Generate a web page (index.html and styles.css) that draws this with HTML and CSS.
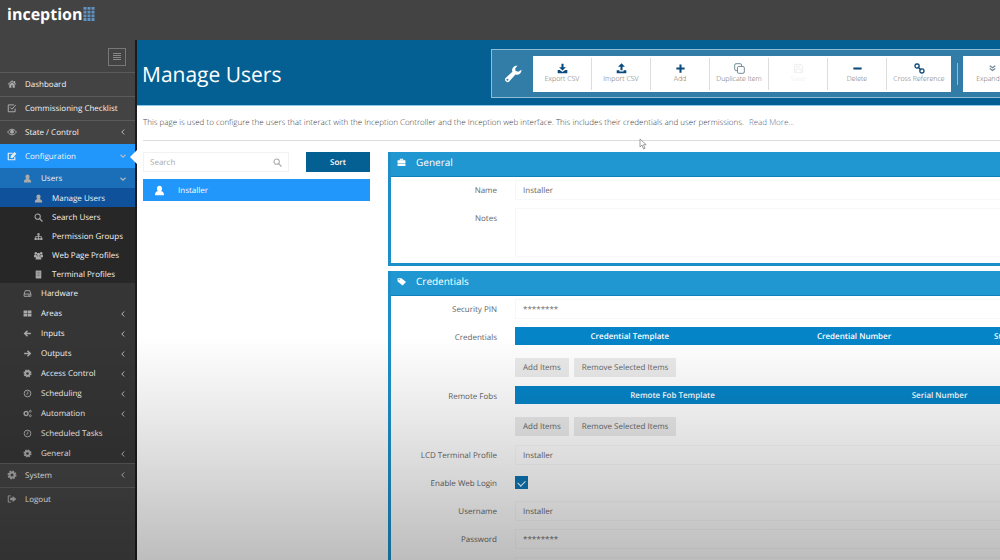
FILE: index.html
```html
<!DOCTYPE html>
<html lang="en">
<head>
    <meta charset="UTF-8">
    <meta name="viewport" content="width=device-width, initial-scale=1.0">
    <title>Manage Users - Inception</title>
    <link rel="stylesheet" href="styles.css">
</head>
<body>

    <!-- Icon set -->
    <svg class="sprite" aria-hidden="true">
        <symbol id="i-home" viewBox="0 0 16 16"><path d="M8 2 1 8.300l1 1 6-5.300 6 5.300 1-1-2-1.800V3h-2v1.700zM3.500 9v5h3.500v-4h2v4h3.500V9L8 5z"/></symbol>
        <symbol id="i-check" viewBox="0 0 16 16"><path d="M13 9v5H2V3h9M5 7l3 3 6-7" fill="none" stroke="currentColor" stroke-width="1.600"/></symbol>
        <symbol id="i-eye" viewBox="0 0 16 16"><path d="M1 8c4-6 10-6 14 0-4 6-10 6-14 0z" fill="none" stroke="currentColor" stroke-width="1.500"/><circle cx="8" cy="7.500" r="3.200"/></symbol>
        <symbol id="i-edit" viewBox="0 0 16 16"><path d="M12.500 9v5H2V3.500h7" fill="none" stroke="currentColor" stroke-width="1.800"/><path d="M6 11V8l6-6.500 3 3L9 11z"/></symbol>
        <symbol id="i-user" viewBox="0 0 16 16"><path d="M8 1c2.500 0 3.700 1.800 3.700 4 0 1.600-.6 3-1.500 3.800C13 9.500 14.500 11 14.500 15h-13c0-4 1.500-5.500 4.300-6.200C4.900 8 4.300 6.600 4.300 5 4.300 2.800 5.500 1 8 1z"/></symbol>
        <symbol id="i-search" viewBox="0 0 16 16"><circle cx="6.500" cy="6.500" r="4.700" fill="none" stroke="currentColor" stroke-width="1.800"/><path d="m10 10 5 5" stroke="currentColor" stroke-width="2.200"/></symbol>
        <symbol id="i-sitemap" viewBox="0 0 16 16"><path d="M6 2h4v4H8.700v1.500h5V10H15v4h-4v-4h1.500V8.700H8.700V10H10v4H6v-4h1.300V8.700H3.500V10H5v4H1v-4h1.300V7.500h5V6H6z"/></symbol>
        <symbol id="i-group" viewBox="0 0 16 16"><circle cx="3.200" cy="4" r="2.200"/><circle cx="12.800" cy="4" r="2.200"/><circle cx="8" cy="6" r="3"/><path d="M0 11V8q0-2 4-1.500L5.500 9 4 11zM16 11V8q0-2-4-1.500L10.500 9l1.500 2zM3 15v-2.500Q3 9 8 9t5 3.500V15z"/></symbol>
        <symbol id="i-building" viewBox="0 0 16 16"><path d="M3 1h10v14H3z"/><path d="M5 4h6M5 7h6M5 10h6" stroke="#262626" stroke-dasharray="1.200"/></symbol>
        <symbol id="i-hdd" viewBox="0 0 16 16"><path d="M2 9 4 3h8l2 6v4H2zM2 9h12M9 11h3" fill="none" stroke="currentColor" stroke-width="1.600"/></symbol>
        <symbol id="i-grid" viewBox="0 0 16 16"><path d="M1 2.500h6.500v5H1zM8.500 2.500H15v5H8.500zM1 8.500h6.500v5H1zM8.500 8.500H15v5H8.500z"/></symbol>
        <symbol id="i-left" viewBox="0 0 16 16"><path d="M14 8H3M8 3 3 8l5 5" fill="none" stroke="currentColor" stroke-width="2.600"/></symbol>
        <symbol id="i-right" viewBox="0 0 16 16"><path d="M2 8h11M8 3l5 5-5 5" fill="none" stroke="currentColor" stroke-width="2.600"/></symbol>
        <symbol id="i-cog" viewBox="0 0 16 16"><circle cx="8" cy="8" r="4" fill="none" stroke="currentColor" stroke-width="3.200"/><circle cx="8" cy="8" r="6" fill="none" stroke="currentColor" stroke-width="2.400" stroke-dasharray="2.600 2.112"/></symbol>
        <symbol id="i-cogs" viewBox="0 0 16 16"><circle cx="5.500" cy="8" r="3.500" fill="none" stroke="currentColor" stroke-width="2.600"/><circle cx="13" cy="4" r="1.700" fill="none" stroke="currentColor" stroke-width="1.600"/><circle cx="13" cy="12" r="1.700" fill="none" stroke="currentColor" stroke-width="1.600"/></symbol>
        <symbol id="i-clock" viewBox="0 0 16 16"><circle cx="8" cy="8" r="6" fill="none" stroke="currentColor" stroke-width="1.700"/><path d="M8.500 4v5H5.500" fill="none" stroke="currentColor" stroke-width="1.400"/></symbol>
        <symbol id="i-logout" viewBox="0 0 16 16"><path d="M6 3H2v10h4" fill="none" stroke="currentColor" stroke-width="1.600"/><path d="M5 6h4V3l6 5-6 5v-3H5z"/></symbol>
        <symbol id="i-wrench" viewBox="0 0 16 16"><path d="M15.500 4.300c.2 3-2.600 5-5.300 4.100L4.600 14.600c-1.900 1.900-5-.9-3.200-3L7.400 6C6.500 3 8.900.2 12 .6L9.900 3l.4 2.400 2.500.6zM3 12.300a.8.800 0 1 0 .1 0z" fill-rule="evenodd"/></symbol>
        <symbol id="i-download" viewBox="0 0 16 16"><path d="M6.500 1h3v5H13L8 11 3 6h3.500zM1 10h3l4 3 4-3h3v5H1z"/></symbol>
        <symbol id="i-upload" viewBox="0 0 16 16"><path d="M6.500 10.500h3v-5H13L8 .5 3 5.500h3.500zM1 10.500h4v2h6v-2h4V15H1z"/></symbol>
        <symbol id="i-plus" viewBox="0 0 16 16"><path d="M6.500 2h3v4.500H14v3H9.500V14h-3V9.500H2v-3h4.500z"/></symbol>
        <symbol id="i-minus" viewBox="0 0 16 16"><path d="M2 6.500h12v3H2z"/></symbol>
        <symbol id="i-copy" viewBox="0 0 16 16"><rect x="1" y="1" width="10" height="10" rx="2" fill="none" stroke="currentColor" stroke-width="1.400"/><rect x="5" y="5" width="10" height="10" rx="2" fill="#fff" stroke="currentColor" stroke-width="1.400"/></symbol>
        <symbol id="i-save" viewBox="0 0 16 16"><path d="M2 2h10l2 2v10H2zM5 2v4h5V2M4 14V9h8v5" fill="none" stroke="currentColor" stroke-width="1.400"/></symbol>
        <symbol id="i-link" viewBox="0 0 16 16"><g fill="none" stroke="currentColor" stroke-width="2"><rect x="1.500" y="1.500" width="6" height="6" rx="2.600"/><rect x="8.500" y="8.500" width="6" height="6" rx="2.600"/><path d="m5.500 5.500 5 5"/></g></symbol>
        <symbol id="i-expand" viewBox="0 0 16 16"><path d="m4 4 4 3 4-3M4 8l4 3 4-3" fill="none" stroke="currentColor" stroke-width="1.800"/></symbol>
        <symbol id="i-briefcase" viewBox="0 0 16 16"><path d="M5 4V1.500h6V4h4v5H1V4zm1.500 0h3V3h-3zM1 9.700h14V14H1z"/></symbol>
        <symbol id="i-tag" viewBox="0 0 16 16"><path d="M1 2h7l8 7-6 6-9-7zm2.800 1.500a1 1 0 1 0 .1 0z" fill-rule="evenodd"/></symbol>
        <symbol id="i-angle-left" viewBox="0 0 16 16"><path d="m10.500 3-5 5 5 5" fill="none" stroke="currentColor" stroke-width="2"/></symbol>
        <symbol id="i-angle-down" viewBox="0 0 16 16"><path d="m3 5.500 5 5 5-5" fill="none" stroke="currentColor" stroke-width="2.200"/></symbol>
    </svg>

    <header class="topbar">
        <a class="logo" href="#">inception
            <svg viewBox="0 0 12 14" aria-hidden="true"><path d="M2 0v14M6 0v14M10 0v14" stroke="#6093c4" stroke-width="3" stroke-dasharray="2.800 .9"/></svg>
        </a>
    </header>

    <div class="layout">
        <nav class="sidebar">
            <div class="sidebar-top">
                <button class="menu-toggle" aria-label="Toggle menu"><span></span></button>
            </div>
            <ul class="menu">
                <li><a href="#"><svg class="icon"><use href="#i-home"/></svg>Dashboard</a></li>
                <li><a href="#"><svg class="icon"><use href="#i-check"/></svg>Commissioning Checklist</a></li>
                <li><a href="#"><svg class="icon"><use href="#i-eye"/></svg>State / Control<svg class="arrow"><use href="#i-angle-left"/></svg></a></li>
                <li>
                    <a class="open" href="#"><svg class="icon"><use href="#i-edit"/></svg>Configuration<svg class="arrow"><use href="#i-angle-down"/></svg></a>
                    <ul class="submenu">
                        <li>
                            <a class="open" href="#"><svg class="icon"><use href="#i-user"/></svg>Users<svg class="arrow"><use href="#i-angle-down"/></svg></a>
                            <ul class="submenu-inner">
                                <li><a class="active" href="#"><svg class="icon"><use href="#i-user"/></svg>Manage Users</a></li>
                                <li><a href="#"><svg class="icon"><use href="#i-search"/></svg>Search Users</a></li>
                                <li><a href="#"><svg class="icon"><use href="#i-sitemap"/></svg>Permission Groups</a></li>
                                <li><a href="#"><svg class="icon"><use href="#i-group"/></svg>Web Page Profiles</a></li>
                                <li><a href="#"><svg class="icon"><use href="#i-building"/></svg>Terminal Profiles</a></li>
                            </ul>
                        </li>
                        <li><a href="#"><svg class="icon"><use href="#i-hdd"/></svg>Hardware</a></li>
                        <li><a href="#"><svg class="icon"><use href="#i-grid"/></svg>Areas<svg class="arrow"><use href="#i-angle-left"/></svg></a></li>
                        <li><a href="#"><svg class="icon"><use href="#i-left"/></svg>Inputs<svg class="arrow"><use href="#i-angle-left"/></svg></a></li>
                        <li><a href="#"><svg class="icon"><use href="#i-right"/></svg>Outputs<svg class="arrow"><use href="#i-angle-left"/></svg></a></li>
                        <li><a href="#"><svg class="icon"><use href="#i-cog"/></svg>Access Control<svg class="arrow"><use href="#i-angle-left"/></svg></a></li>
                        <li><a href="#"><svg class="icon"><use href="#i-clock"/></svg>Scheduling<svg class="arrow"><use href="#i-angle-left"/></svg></a></li>
                        <li><a href="#"><svg class="icon"><use href="#i-cogs"/></svg>Automation<svg class="arrow"><use href="#i-angle-left"/></svg></a></li>
                        <li><a href="#"><svg class="icon"><use href="#i-clock"/></svg>Scheduled Tasks</a></li>
                        <li><a href="#"><svg class="icon"><use href="#i-cog"/></svg>General<svg class="arrow"><use href="#i-angle-left"/></svg></a></li>
                    </ul>
                </li>
                <li><a href="#"><svg class="icon"><use href="#i-cog"/></svg>System<svg class="arrow"><use href="#i-angle-left"/></svg></a></li>
                <li><a href="#"><svg class="icon"><use href="#i-logout"/></svg>Logout</a></li>
            </ul>
        </nav>

        <main class="content">
            <div class="page-head">
                <h1>Manage Users</h1>
                <div class="toolbar">
                    <svg class="wrench"><use href="#i-wrench"/></svg>
                    <div class="tools">
                        <button><svg><use href="#i-download"/></svg>Export CSV</button>
                        <button><svg><use href="#i-upload"/></svg>Import CSV</button>
                        <button><svg><use href="#i-plus"/></svg>Add</button>
                        <button class="grey"><svg><use href="#i-copy"/></svg>Duplicate Item</button>
                        <button disabled><svg><use href="#i-save"/></svg>Save</button>
                        <button><svg><use href="#i-minus"/></svg>Delete</button>
                        <button class="wide"><svg><use href="#i-link"/></svg>Cross Reference</button>
                    </div>
                    <span class="divider"></span>
                    <div class="tools">
                        <button class="grey"><svg><use href="#i-expand"/></svg>Expand All</button>
                    </div>
                </div>
            </div>

            <div class="page-body">
                <p class="intro">This page is used to configure the users that interact with the Inception Controller and the Inception web interface. This includes their credentials and user permissions. <a href="#">Read More...</a></p>

                <div class="columns">
                    <section class="list">
                        <div class="list-tools">
                            <div class="search">
                                <input type="text" placeholder="Search" aria-label="Search">
                                <svg><use href="#i-search"/></svg>
                            </div>
                            <button class="sort">Sort</button>
                        </div>
                        <a class="list-item" href="#"><svg><use href="#i-user"/></svg>Installer</a>
                    </section>

                    <form class="panels">
                        <section class="panel">
                            <h2><svg><use href="#i-briefcase"/></svg>General</h2>
                            <div class="fields">
                                <div class="row">
                                    <label for="name">Name</label>
                                    <input id="name" type="text" value="Installer">
                                </div>
                                <div class="row">
                                    <label for="notes">Notes</label>
                                    <textarea id="notes"></textarea>
                                </div>
                            </div>
                        </section>

                        <section class="panel">
                            <h2><svg><use href="#i-tag"/></svg>Credentials</h2>
                            <div class="fields">
                                <div class="row">
                                    <label for="pin">Security PIN</label>
                                    <input id="pin" type="text" value="********">
                                </div>
                                <div class="row">
                                    <span class="label">Credentials</span>
                                    <div class="grid">
                                        <table class="credentials">
                                            <tr><th>Credential Template</th><th>Credential Number</th><th>Status</th></tr>
                                        </table>
                                        <button type="button">Add Items</button>
                                        <button type="button">Remove Selected Items</button>
                                    </div>
                                </div>
                                <div class="row">
                                    <span class="label">Remote Fobs</span>
                                    <div class="grid">
                                        <table class="fobs">
                                            <tr><th>Remote Fob Template</th><th>Serial Number</th></tr>
                                        </table>
                                        <button type="button">Add Items</button>
                                        <button type="button">Remove Selected Items</button>
                                    </div>
                                </div>
                                <div class="row">
                                    <label for="lcd">LCD Terminal Profile</label>
                                    <select id="lcd"><option>Installer</option></select>
                                </div>
                                <div class="row">
                                    <label for="web">Enable Web Login</label>
                                    <input id="web" type="checkbox" checked>
                                </div>
                                <div class="row">
                                    <label for="username">Username</label>
                                    <input id="username" type="text" value="Installer">
                                </div>
                                <div class="row">
                                    <label for="password">Password</label>
                                    <input id="password" type="text" value="********">
                                </div>
                                <div class="row">
                                    <label for="email"></label>
                                    <input id="email" type="text" aria-label="Email">
                                </div>
                            </div>
                        </section>
                    </form>
                </div>
            </div>
            <svg class="pointer" viewBox="0 0 8 12" aria-hidden="true"><path d="M1 1v8l2-2 1.500 4 1.500-.7L4.500 6.700h2.700z" fill="#fff" stroke="#888" stroke-width=".8"/></svg>
        </main>
    </div>

</body>
</html>
```
FILE: styles.css
```css
* {
    box-sizing: border-box;
}

body {
    margin: 0;
    height: 100vh;
    overflow: hidden;
    display: flex;
    flex-direction: column;
    background: #434343;
    font-family: "Open Sans", sans-serif;
    font-size: 8px;
    text-rendering: geometricPrecision;
    color: #666;
}

/* shade over the lower part of the page */
body::after {
    content: "";
    position: absolute;
    inset: 0;
    background: linear-gradient(rgba(0, 0, 0, 0) 60%, rgba(0, 0, 0, 0.1) 77%, rgba(0, 0, 0, 0.26));
    pointer-events: none;
}

button, input, select, textarea {
    font: inherit;
    text-rendering: inherit;
    color: inherit;
    margin: 0;
}

a {
    text-decoration: none;
}

svg {
    fill: currentColor;
    flex: none;
}

.sprite {
    display: none;
}

/* Top bar */
.topbar {
    height: 40px;
    flex: none;
    padding: 3px 7px;
}

.logo {
    display: flex;
    align-items: center;
    gap: 1px;
    font-size: 16px;
    line-height: 22px;
    font-weight: 700;
    color: #fff;
}

.logo svg {
    width: 12px;
    height: 14px;
}

.layout {
    display: flex;
    flex: 1;
    min-height: 0;
}

/* Sidebar */
.sidebar {
    width: 137px;
    flex: none;
    border-right: 2px solid #1c1c1c;
    font-weight: 500;
}

.sidebar-top {
    height: 32px;
    padding: 8px 9px;
    display: flex;
    justify-content: flex-end;
}

.menu-toggle {
    width: 18px;
    height: 18px;
    padding: 4px;
    background: none;
    border: 1px solid #777;
}

.menu-toggle span {
    display: block;
    height: 8px;
    background: repeating-linear-gradient(#888 0 1px, transparent 1px 2px);
}

.sidebar ul {
    list-style: none;
    margin: 0;
    padding: 0;
}

.menu a {
    display: flex;
    align-items: center;
    height: 24px;
    padding: 0 8px 1px 7px;
    border-top: 1px solid #5a5a5a;
    color: #f4f4f4;
    white-space: nowrap;
}

.menu a.open {
    background: #2196fb;
    border-color: #2196fb;
    position: relative;
}

.menu > li > a.open::after {
    content: "";
    position: absolute;
    right: -2px;
    top: 5px;
    border: 7px solid transparent;
    border-right-color: #fff;
    border-left: 0;
}

.icon {
    width: 10px;
    height: 10px;
    margin-right: 8px;
    color: #aaa;
}

.open > .icon {
    color: #eee;
}

.arrow {
    width: 8px;
    height: 8px;
    margin-left: auto;
    color: #bbb;
}

.menu .submenu {
    background: #353535;
}

.menu .submenu a {
    height: 20px;
    padding: 1px 8px 0 23px;
    border: 0;
}

.menu .submenu a.open {
    background: #1b6fb8;
}

.submenu .icon {
    width: 9px;
    height: 9px;
    margin-right: 9px;
}

.submenu .open > .icon {
    color: #aaa;
}

.menu .submenu-inner {
    background: #272727;
}

.menu .submenu .submenu-inner a {
    height: 19px;
    padding: 1px 8px 0 34px;
}

.menu .submenu .submenu-inner a.active {
    background: #0f529b;
}

/* Page header */
.content {
    flex: 1;
    min-width: 0;
    overflow: hidden;
    background: #fff;
    position: relative;
}

.page-head {
    display: flex;
    height: 66px;
    padding: 9px 0 0 5px;
    background: #045f92;
    border-bottom: 1px solid #8ac8ee;
}

h1 {
    width: 349px;
    flex: none;
    margin: 0;
    font-size: 21px;
    line-height: 52px;
    font-weight: 400;
    color: #fff;
}

.toolbar {
    flex: 1 0 auto;
    display: flex;
    align-items: center;
    height: 49px;
    background: #317da8;
    border: 1px solid #8fbdd6;
}

.wrench {
    width: 18px;
    height: 18px;
    margin: 0 11px 0 12px;
    color: #fff;
}

.tools {
    display: flex;
    height: 36px;
    padding: 2px 0;
    background: #fff;
}

.tools button {
    width: 59px;
    padding: 0;
    display: flex;
    flex-direction: column;
    align-items: center;
    gap: 1px;
    justify-content: center;
    background: none;
    border: 0;
    border-right: 1px solid #ddd;
    font-size: 7px;
    line-height: 10px;
    font-weight: 300;
    white-space: nowrap;
    color: #666;
}

.tools button.wide {
    width: 64px;
}

.tools button:last-child {
    border: 0;
}

.tools svg {
    width: 11px;
    height: 11px;
    color: #0a4a7c;
}

.tools .grey svg {
    color: #6d8794;
}

.tools button:disabled,
.tools button:disabled svg {
    color: #eee;
}

.divider {
    width: 1px;
    height: 22px;
    margin: 0 5px 0 6px;
    background: #8fbdd6;
}

/* Page body */
.page-body {
    padding: 0 0 0 6px;
}

.intro {
    margin: 0 0 11px;
    padding: 11px 0;
    line-height: 12px;
    border-bottom: 1px solid #ddd;
    font-weight: 300;
    white-space: nowrap;
    color: #444;
}

.intro a {
    margin-left: 3px;
    color: #4f6f9b;
}

.columns {
    display: flex;
    gap: 18px;
}

.list {
    width: 227px;
    flex: none;
}

.list-tools {
    display: flex;
    gap: 17px;
    margin-bottom: 7px;
}

.search {
    flex: 1;
    min-width: 0;
    display: flex;
    align-items: center;
    height: 20px;
    padding: 0 6px;
    border: 1px solid #f2f2f2;
}

.search input {
    flex: 1;
    min-width: 0;
    padding: 0;
    border: 0;
    background: none;
}

.search input::placeholder {
    color: #aaa;
}

.search svg {
    width: 9px;
    height: 9px;
    color: #aaa;
}

.sort {
    width: 64px;
    height: 20px;
    border: 0;
    background: #045f92;
    color: #fff;
    font-weight: 600;
}

.list-item {
    display: flex;
    align-items: center;
    gap: 13px;
    height: 22px;
    padding-left: 11px;
    background: #2196fb;
    color: #fff;
    font-weight: 500;
}

.list-item svg {
    width: 11px;
    height: 11px;
}

/* Panels */
.panels {
    flex: 1;
    min-width: 664px;
}

.panel {
    margin-bottom: 5px;
    border: 3px solid #1c8fc8;
    border-top: 0;
}

h2 {
    display: flex;
    align-items: center;
    gap: 10px;
    height: 25px;
    margin: 0;
    padding: 0 0 4px 6px;
    background: #2097d1;
    border-bottom: 1px solid #1280b8;
    font-size: 10px;
    font-weight: 400;
    color: #fff;
}

h2 svg {
    width: 9px;
    height: 9px;
}

.fields {
    display: flex;
    flex-direction: column;
    gap: 8px;
    padding: 3px 0 6px;
}

.row {
    display: flex;
    height: 20px;
}

.row:has(textarea),
.row:has(.grid) {
    height: auto;
}

.row label,
.row .label {
    width: 106px;
    margin-right: 18px;
    flex: none;
    text-align: right;
    line-height: 22px;
}

.row input[type="text"],
.row select,
.row textarea {
    flex: 1;
    height: 20px;
    padding: 0 7px;
    background: none;
    border: 1px solid rgba(0, 0, 0, 0.03);
    border-radius: 0;
    appearance: none;
}

.row textarea {
    height: 49px;
    resize: none;
}

.row input[type="checkbox"] {
    appearance: none;
    width: 13px;
    height: 13px;
    margin-top: 3px;
    background: #0c76b4;
    display: grid;
    place-items: center;
}

.row input[type="checkbox"]:checked::before {
    content: "";
    width: 6px;
    height: 4px;
    border: solid #fff;
    border-width: 0 0 1px 1px;
    transform: rotate(-45deg);
}

.grid {
    flex: 1;
    padding-bottom: 1px;
}

.grid table {
    width: 100%;
    margin-bottom: 13px;
    table-layout: fixed;
    border-collapse: collapse;
}

.grid th {
    height: 18px;
    padding: 0;
    background: #0584c7;
    color: #fff;
    font-weight: 600;
}

.credentials th:first-child {
    width: 43%;
}

.credentials th:nth-child(2) {
    width: 41%;
}

.fobs th:first-child {
    width: 59%;
}

.grid button {
    height: 19px;
    padding: 0 8px;
    margin-right: 3px;
    border: 0;
    background: #eaeaea;
}

/* Mouse pointer */
.pointer {
    position: absolute;
    left: 502px;
    top: 98px;
    width: 8px;
    height: 12px;
}
```
